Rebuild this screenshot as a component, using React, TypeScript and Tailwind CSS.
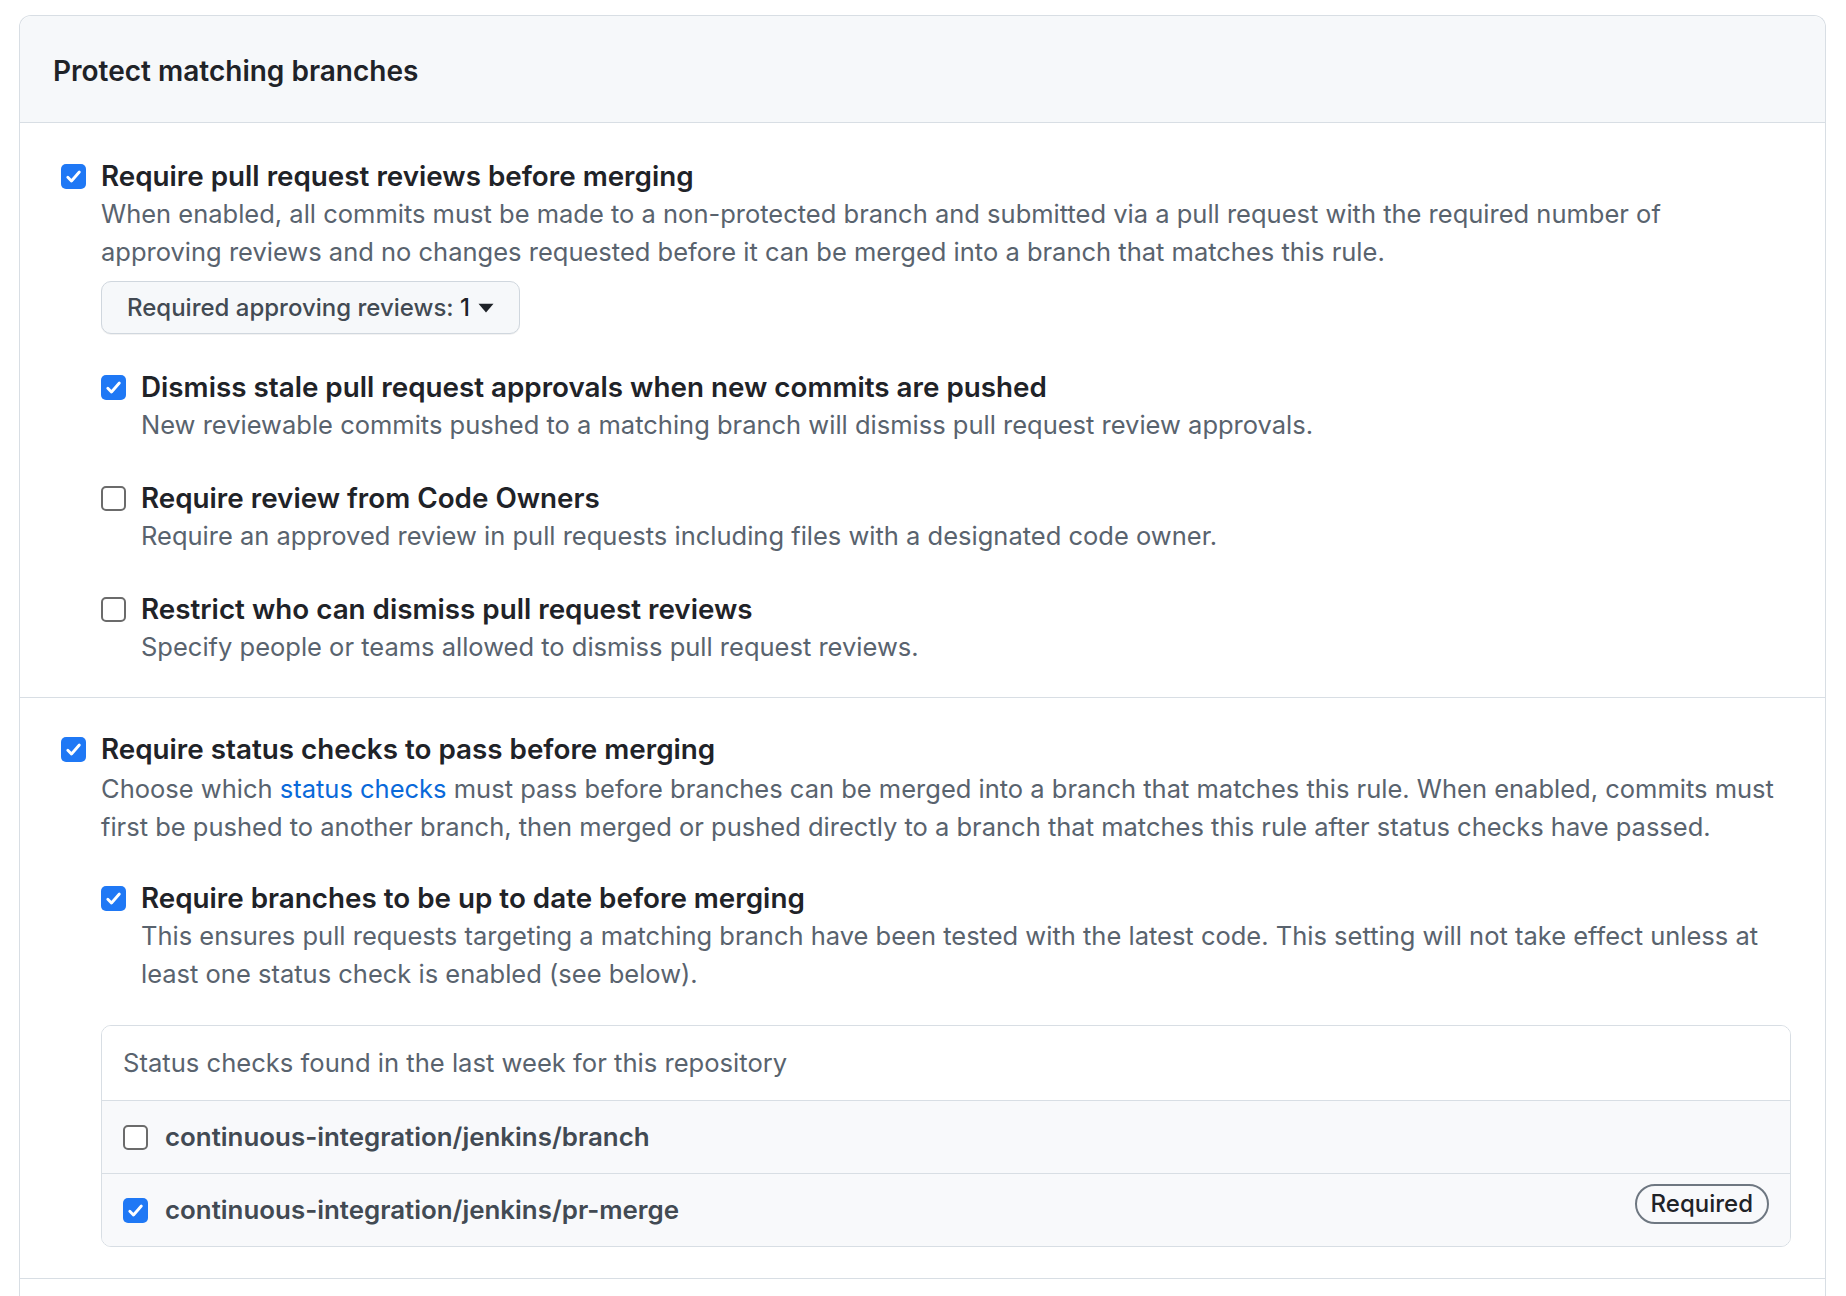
import React from "react";

function Box({ checked }: { checked: boolean }) {
  if (checked) {
    return (
      <span className="flex h-[25px] w-[25px] shrink-0 items-center justify-center rounded-[5px] bg-[#1f78f5]">
        <svg viewBox="0 0 16 16" className="h-[19px] w-[19px]" fill="none">
          <path d="M3.2 8.6l3.1 3.2L12.9 4.2" stroke="#fff" strokeWidth="2.4" strokeLinecap="round" strokeLinejoin="round" />
        </svg>
      </span>
    );
  }
  return <span className="block h-[25px] w-[25px] shrink-0 rounded-[5px] border-2 border-[#6b6b6b] bg-white" />;
}

function Option({
  checked,
  label,
  children,
}: {
  checked: boolean;
  label: string;
  children?: React.ReactNode;
}) {
  return (
    <div>
      <div className="flex items-center gap-[15px]">
        <Box checked={checked} />
        <span className="text-[27.8px] font-semibold leading-[38px] text-[#1f2328]">{label}</span>
      </div>
      <div className="pl-[40px]">{children}</div>
    </div>
  );
}

function Desc({ children }: { children: React.ReactNode }) {
  return <p className="pr-[6px] text-[25.5px] leading-[38px] text-[#59636e]">{children}</p>;
}

export default function App() {
  return (
    <div className="min-h-screen bg-white pl-[19px] pr-[20px] pt-[15px]" style={{ fontFamily: "Inter, 'Liberation Sans', sans-serif" }}>
      <div className="h-[1300px] rounded-t-[12px] border border-b-0 border-[#d8dee4]">
        <div className="flex h-[107px] items-center rounded-t-[12px] border-b border-[#d8dee4] bg-[#f6f8fa] pl-[33px] pt-[4px]">
          <h2 className="text-[28px] font-semibold text-[#1f2328]">Protect matching branches</h2>
        </div>

        <div className="border-b border-[#d8dee4] pb-[31px] pl-[41px] pr-[34px] pt-[34px]">
          <Option checked label="Require pull request reviews before merging">
            <Desc>
              When enabled, all commits must be made to a non-protected branch and submitted via a pull request with the
              required number of approving reviews and no changes requested before it can be merged into a branch that
              matches this rule.
            </Desc>
            <button className="mt-[10px] flex h-[53px] w-[419px] items-center whitespace-nowrap rounded-[10px] border border-[#d0d7de] bg-[#f6f8fa] px-[25px] text-[24px] font-medium text-[#424a53] shadow-[0_1px_0_rgba(31,35,40,0.06)]">
              <span>Required approving reviews:&nbsp;</span>
              <span className="text-[#1f2328]">1</span>
              <svg viewBox="0 0 12 8" className="ml-[8px] h-[10px] w-[17px]">
                <path d="M0 0.5h12L6 7.5z" fill="#1f2328" />
              </svg>
            </button>
            <div className="mt-[34px] flex flex-col gap-[35px]">
              <Option checked label="Dismiss stale pull request approvals when new commits are pushed">
                <Desc>New reviewable commits pushed to a matching branch will dismiss pull request review approvals.</Desc>
              </Option>
              <Option checked={false} label="Require review from Code Owners">
                <Desc>Require an approved review in pull requests including files with a designated code owner.</Desc>
              </Option>
              <Option checked={false} label="Restrict who can dismiss pull request reviews">
                <Desc>Specify people or teams allowed to dismiss pull request reviews.</Desc>
              </Option>
            </div>
          </Option>
        </div>

        <div className="border-b border-[#d8dee4] pb-[31px] pl-[41px] pr-[34px] pt-[32px]">
          <Option checked label="Require status checks to pass before merging">
            <div className="pt-[2px]">
              <Desc>
                Choose which <a className="text-[#0969da]">status checks</a> must pass before branches can be merged
                into a branch that matches this rule. When enabled, commits must first be pushed to another branch, then
                merged or pushed directly to a branch that matches this rule after status checks have passed.
              </Desc>
            </div>
            <div className="mt-[33px]">
              <Option checked label="Require branches to be up to date before merging">
                <Desc>
                  This ensures pull requests targeting a matching branch have been tested with the latest code. This
                  setting will not take effect unless at least one status check is enabled (see below).
                </Desc>
              </Option>
            </div>
            <div className="mt-[32px] overflow-hidden rounded-[10px] border border-[#d8dee4]">
              <div className="flex h-[75px] items-center border-b border-[#d8dee4] bg-white px-[21px] text-[25.6px] text-[#59636e]">
                Status checks found in the last week for this repository
              </div>
              <div className="flex h-[73px] items-center gap-[17px] border-b border-[#d8dee4] bg-[#f8f9fb] px-[21px]">
                <Box checked={false} />
                <span className="text-[25.9px] font-semibold text-[#424a53]">continuous-integration/jenkins/branch</span>
              </div>
              <div className="flex h-[72px] items-center gap-[17px] bg-[#f8f9fb] px-[21px]">
                <Box checked />
                <span className="text-[25.9px] font-semibold text-[#424a53]">continuous-integration/jenkins/pr-merge</span>
                <span className="ml-auto mb-[12px] rounded-full border-2 border-[#6e7781] px-[14px] py-[0px] text-[24px] font-medium text-[#1f2328]">
                  Required
                </span>
              </div>
            </div>
          </Option>
        </div>
      </div>
    </div>
  );
}
